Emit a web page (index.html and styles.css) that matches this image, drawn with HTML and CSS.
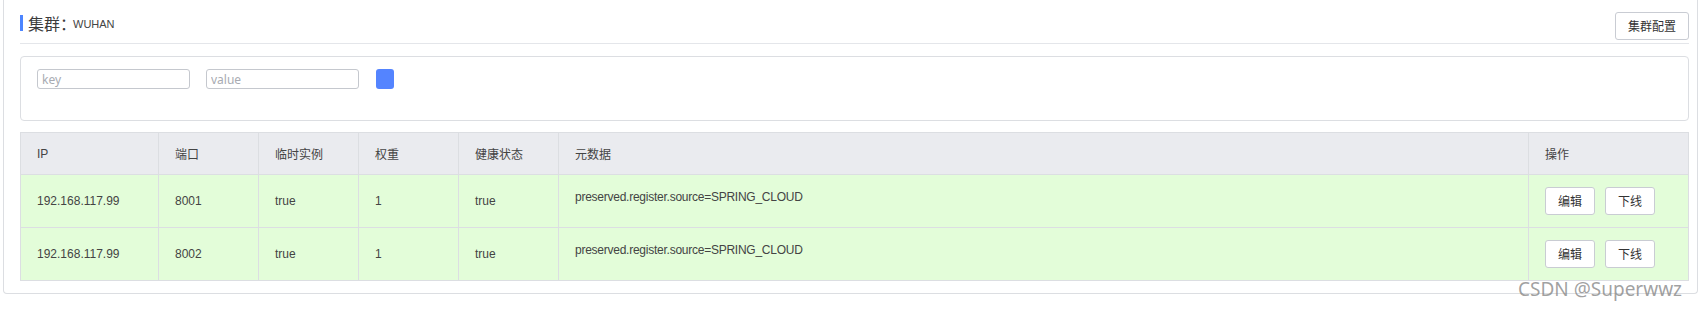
FILE: index.html
```html
<!DOCTYPE html>
<html lang="zh-CN">
<head>
<meta charset="utf-8">
<title>集群</title>
<link rel="stylesheet" href="styles.css">
</head>
<body>
<div class="page">
  <div class="card">
    <div class="card-head">
      <div class="title">
        <span class="bar"></span>
        <span class="title-main">集群：</span>
        <span class="title-sub">WUHAN</span>
      </div>
      <button class="btn">集群配置</button>
    </div>
    <div class="search">
      <input class="inp" placeholder="key">
      <input class="inp" placeholder="value">
      <button class="btn-blue"></button>
    </div>
    <table class="grid">
      <colgroup>
        <col style="width:138px"><col style="width:100px"><col style="width:100px"><col style="width:100px"><col style="width:100px"><col style="width:970px"><col style="width:160px">
      </colgroup>
      <thead>
        <tr><th>IP</th><th>端口</th><th>临时实例</th><th>权重</th><th>健康状态</th><th>元数据</th><th>操作</th></tr>
      </thead>
      <tbody>
        <tr>
          <td>192.168.117.99</td><td>8001</td><td>true</td><td>1</td><td>true</td>
          <td><div class="meta">preserved.register.source=SPRING_CLOUD</div></td>
          <td><div class="ops"><button class="btn btn-sm">编辑</button><button class="btn btn-sm">下线</button></div></td>
        </tr>
        <tr>
          <td>192.168.117.99</td><td>8002</td><td>true</td><td>1</td><td>true</td>
          <td><div class="meta">preserved.register.source=SPRING_CLOUD</div></td>
          <td><div class="ops"><button class="btn btn-sm">编辑</button><button class="btn btn-sm">下线</button></div></td>
        </tr>
      </tbody>
    </table>
  </div>
  <div class="watermark">CSDN @Superwwz</div>
</div>
</body>
</html>
```
FILE: styles.css
```css
* { box-sizing: border-box; }
html, body { margin: 0; padding: 0; background: #fff; }
body {
  font-family: "Liberation Sans", "Noto Sans CJK SC", sans-serif;
  font-size: 12px;
  color: #515a6e;
}
.page {
  position: relative;
  padding: 0 1px 0 3px;
  height: 312px;
}
.card {
  border: 1px solid #dcdee2;
  border-top: 0;
  border-radius: 0 0 4px 4px;
  padding: 0 8px 12px 16px;
}
.card-head {
  display: flex;
  justify-content: space-between;
  align-items: flex-start;
  padding-top: 12px;
  height: 44px;
  border-bottom: 1px solid #e4e6ea;
}
.title {
  display: flex;
  align-items: center;
  margin-top: 3px;
  height: 16px;
}
.bar {
  width: 3px;
  height: 16px;
  background: #4d85ff;
  margin-right: 5px;
}
.title-main {
  font-family: "Noto Sans CJK SC", sans-serif;
  font-size: 16px;
  color: #3c3c3c;
  line-height: 16px;
}
.title-sub {
  font-size: 11px;
  color: #444;
  margin-left: -3px;
  line-height: 16px;
  padding-top: 2px;
}
.btn {
  font-family: "Noto Sans CJK SC", sans-serif;
  font-size: 12px;
  color: #333;
  background: #fff;
  border: 1px solid #c9ccd3;
  border-radius: 3px;
  height: 28px;
  width: 74px;
  padding: 0;
  line-height: 26px;
}
.search {
  margin-top: 12px;
  height: 65px;
  border: 1px solid #dcdee2;
  border-radius: 4px;
  padding: 12px 16px 0 16px;
  display: flex;
  align-items: flex-start;
  gap: 16px;
  width: 1669px;
}
.inp {
  width: 153px;
  height: 20px;
  border: 1px solid #c5c8ce;
  border-radius: 3px;
  padding: 0 4px;
  font-family: "Noto Sans", "Liberation Sans", sans-serif;
  font-size: 12px;
  color: #515a6e;
  outline: none;
}
.inp::placeholder { color: #a8abb2; }
.btn-blue {
  width: 18px;
  height: 20px;
  background: #5484ff;
  border: 0;
  border-radius: 3px;
  padding: 0;
  margin-left: 1px;
}
.grid {
  margin-top: 11px;
  border-collapse: collapse;
  table-layout: fixed;
  width: 1669px;
}
.grid th, .grid td {
  border: 1px solid #dcdee2;
  padding: 0 16px;
  text-align: left;
  font-weight: normal;
  white-space: nowrap;
  overflow: hidden;
  vertical-align: middle;
}
.grid th {
  background: #eaebef;
  height: 42px;
  color: #444;
}
.grid td {
  background: #e3fdd9;
  height: 53px;
  color: #444;
}
.meta { padding-bottom: 8px; letter-spacing: -0.25px; }
.ops { display: flex; gap: 10px; }
.btn-sm { width: 50px; height: 28px; }
.watermark {
  position: absolute;
  left: 1518px;
  top: 276px;
  font-family: "Noto Sans", sans-serif;
  font-size: 19px;
  color: rgba(130, 130, 130, 0.75);
  white-space: nowrap;
}
```
